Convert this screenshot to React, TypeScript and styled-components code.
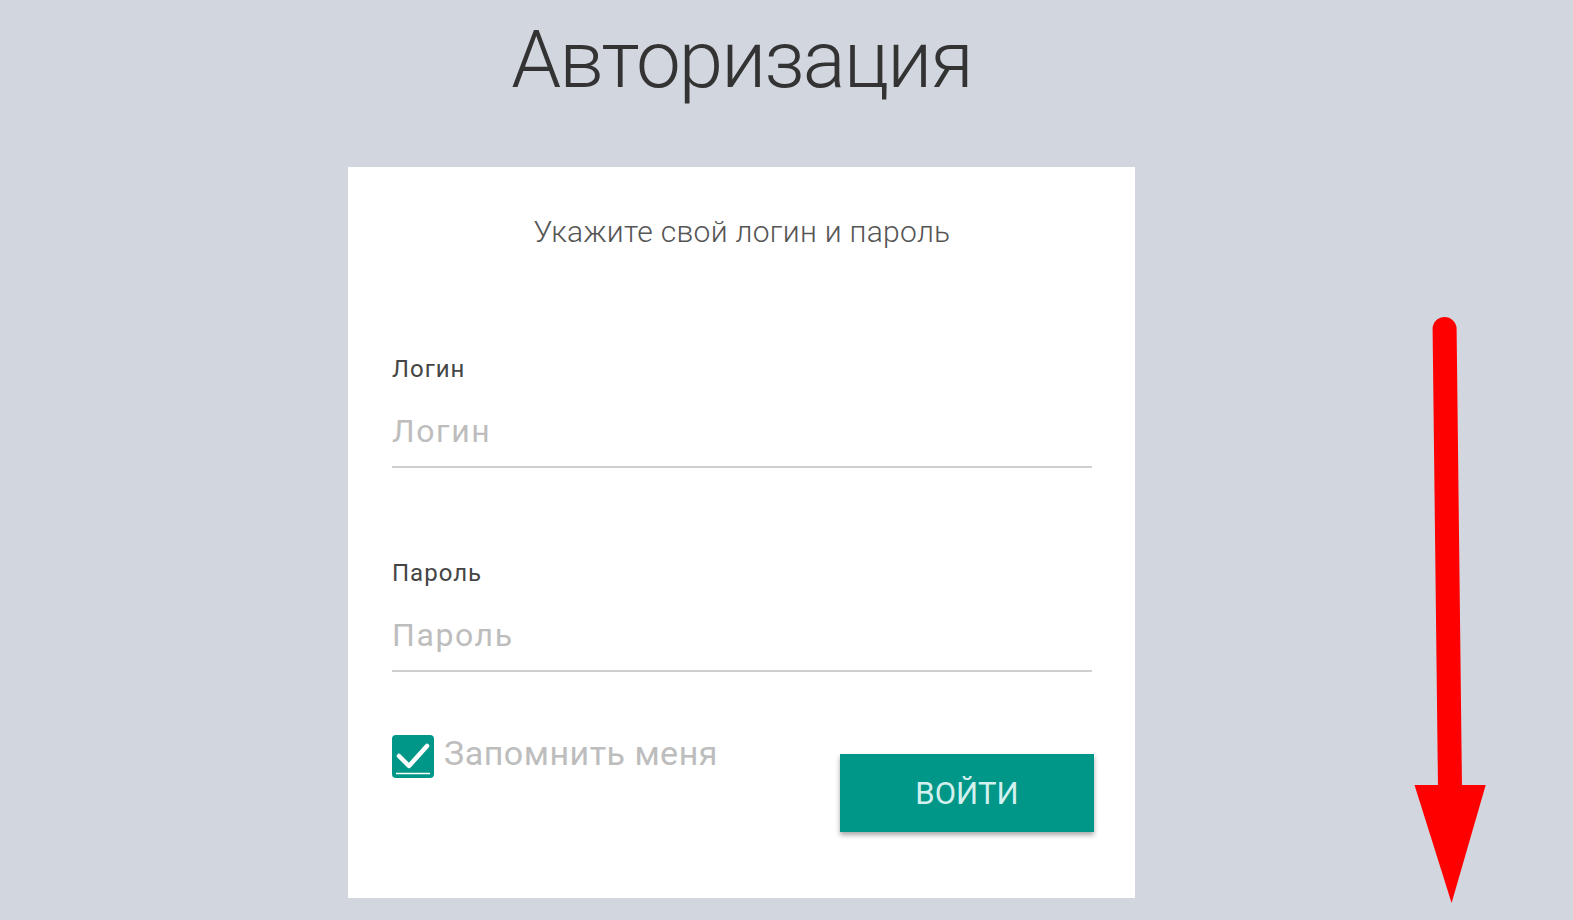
import {createGlobalStyle, styled} from "styled-components";

const GlobalStyle = createGlobalStyle`
    html, body {
        margin: 0;
        padding: 0;
        background: #d1d6df;
        font-family: Roboto, "Open Sans", sans-serif;
    }
`;

const Page = styled.div`
    position: relative;
    height: 920px;
    overflow: hidden;
    padding-left: 348px;
    box-sizing: border-box;
`;

const Column = styled.div`
    width: 787px;
    display: flex;
    flex-direction: column;
`;

const Title = styled.h1`
    margin: 12px 0 59px 0;
    font-family: Roboto, sans-serif;
    font-weight: 300;
    font-size: 80px;
    letter-spacing: -2px;
    line-height: 96px;
    color: #333;
    text-align: center;
`;

const Card = styled.div`
    background: #fff;
    height: 731px;
    box-sizing: border-box;
    padding: 48px 43px 0 44px;
    display: flex;
    flex-direction: column;
`;

const Subtitle = styled.p`
    margin: 0;
    font-family: Roboto, sans-serif;
    font-weight: 300;
    font-size: 30px;
    letter-spacing: 0.3px;
    line-height: 33px;
    color: #555;
    text-align: center;
`;

const Field = styled.div<{$gap: number}>`
    display: flex;
    flex-direction: column;
    margin-top: ${p => p.$gap}px;
`;

const Label = styled.label`
    font-family: Roboto, sans-serif;
    font-size: 24px;
    letter-spacing: 1px;
    line-height: 30px;
    color: #454545;
`;

const Input = styled.input`
    margin-top: 11px;
    padding: 0;
    height: 71px;
    border: none;
    border-bottom: 2px solid #cfcfcf;
    outline: none;
    font-family: Roboto, sans-serif;
    font-size: 32px;
    letter-spacing: 1.6px;
    color: #333;
    background: transparent;

    &::placeholder {
        color: #bdbdbd;
    }
`;

const Footer = styled.div`
    margin-top: 63px;
    margin-right: -2px;
    display: flex;
    justify-content: space-between;
    align-items: flex-start;
`;

const Remember = styled.label`
    display: flex;
    align-items: flex-start;
    gap: 10px;
    cursor: pointer;
`;

const RememberText = styled.span`
    font-family: Roboto, sans-serif;
    font-size: 34px;
    letter-spacing: 0.5px;
    line-height: 37px;
    color: #bdbdbd;
`;

const Button = styled.button`
    margin-top: 19px;
    width: 254px;
    height: 78px;
    border: none;
    background: #009688;
    color: #d2f1ee;
    font-family: Roboto, sans-serif;
    font-size: 31px;
    text-transform: uppercase;
    box-shadow: 0 3px 5px rgba(0, 0, 0, 0.35);
    cursor: pointer;
`;

const Arrow = styled.svg`
    position: absolute;
    left: 1400px;
    top: 300px;
`;

function CheckBox() {
    return (
        <svg width="42" height="43" viewBox="0 0 42 43">
            <rect x="0" y="0" width="42" height="43" rx="4" fill="#009688" />
            <path d="M7 21 L17 31 L35 11" fill="none" stroke="#fff" strokeWidth="4.5" strokeLinecap="round" strokeLinejoin="round" />
            <line x1="4" y1="38.5" x2="38" y2="38.5" stroke="#fff" strokeWidth="1.6" />
        </svg>
    );
}

export default function App() {
    return (
        <>
            <GlobalStyle />
            <Page>
                <Column>
                    <Title>Авторизация</Title>
                    <Card>
                        <Subtitle>Укажите свой логин и пароль</Subtitle>
                        <Field $gap={106}>
                            <Label>Логин</Label>
                            <Input placeholder="Логин" />
                        </Field>
                        <Field $gap={90}>
                            <Label>Пароль</Label>
                            <Input type="password" placeholder="Пароль" />
                        </Field>
                        <Footer>
                            <Remember>
                                <CheckBox />
                                <RememberText>Запомнить меня</RememberText>
                            </Remember>
                            <Button>Войти</Button>
                        </Footer>
                    </Card>
                </Column>
                <Arrow width="100" height="620" viewBox="0 0 100 620">
                    <line x1="44.6" y1="29" x2="50" y2="488" stroke="#ff0000" strokeWidth="24" strokeLinecap="round" />
                    <polygon points="14.5,485 85.7,485 51.6,603" fill="#ff0000" />
                </Arrow>
            </Page>
        </>
    );
}
